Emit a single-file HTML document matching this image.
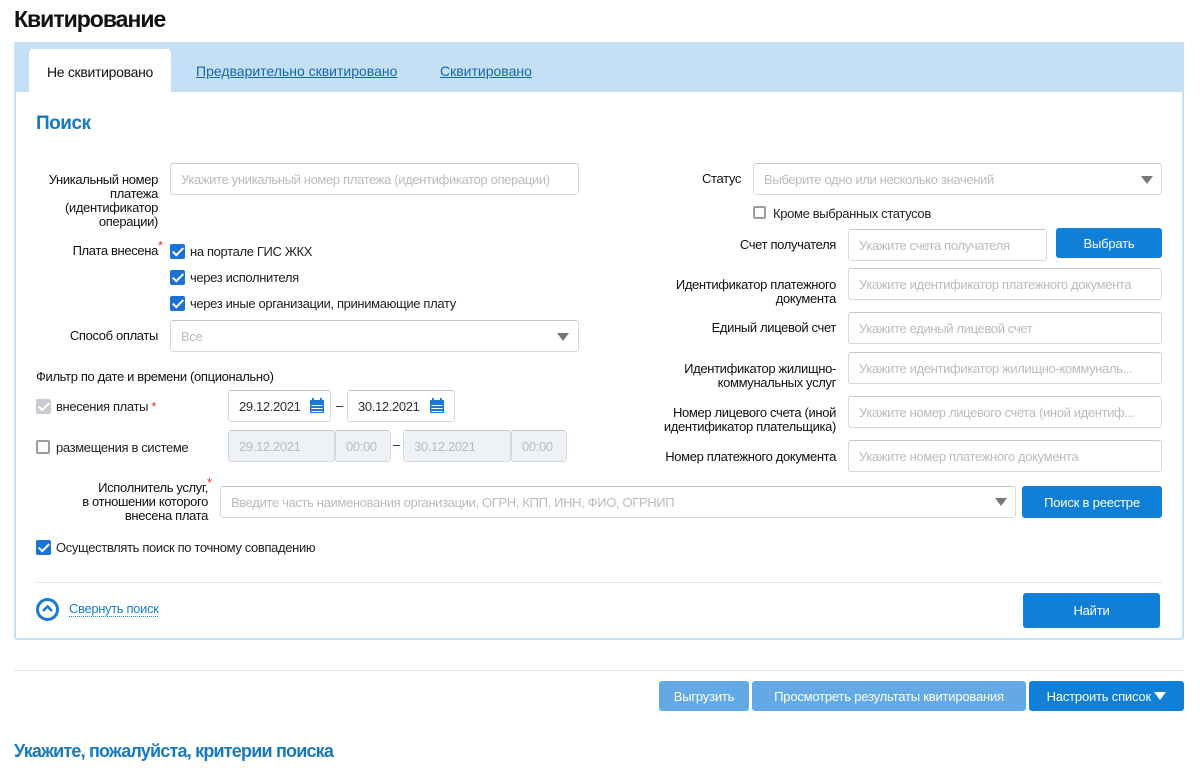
<!DOCTYPE html>
<html><head><meta charset="utf-8">
<style>
*{box-sizing:border-box;margin:0;padding:0}
body{width:1200px;height:777px;background:#fff;position:relative;overflow:hidden;font-family:"Liberation Sans Narrow","Liberation Sans",sans-serif;font-size:13px;color:#222;letter-spacing:-0.35px}
.a{position:absolute}
.lbl{position:absolute;text-align:right;font-size:13px;line-height:14px;color:#111}
.inp{position:absolute;border:1px solid #d6d9dd;border-top-color:#c4c7cb;border-radius:3px;background:#fff;color:#b8bcc0;font-size:13px;padding-left:10px;display:flex;align-items:center;white-space:nowrap;overflow:hidden}
.dis{background:#eef2f7;color:#b8bcc0}
.cb{position:absolute;width:15px;height:15px;border-radius:2px;background:#1a73d4}
.cb::after{content:"";position:absolute;left:5px;top:1px;width:4px;height:9px;border:solid #fff;border-width:0 2px 2px 0;transform:rotate(45deg)}
.cbe{position:absolute;width:14px;height:14px;border:2px solid #9a9ea3;border-radius:2px;background:#fff}
.btn{position:absolute;background:#0f7fd8;color:#fff;border-radius:3px;display:flex;align-items:center;justify-content:center;font-size:13px;letter-spacing:-0.2px}
.lt{background:#63a9e5}
.arr{position:absolute;width:0;height:0;border-left:6px solid transparent;border-right:6px solid transparent;border-top:8px solid #777}
.cal{position:absolute;width:16px;height:16px}
</style></head><body>
<div class="a" style="left:14px;top:6px;font-size:23px;font-weight:bold;color:#111;letter-spacing:-1px">Квитирование</div>

<div class="a" style="left:14px;top:42px;width:1170px;height:598px;border:2px solid #c5e0f5;border-top:none;border-radius:0 0 3px 3px"></div>
<div class="a" style="left:14px;top:42px;width:1170px;height:50px;background:#c5e0f5"></div>
<div class="a" style="left:29px;top:49px;width:142px;height:44px;background:#fff;border-radius:4px 4px 0 0;text-align:center;line-height:46px;font-size:14px;color:#111;letter-spacing:-0.3px">Не сквитировано</div>
<div class="a" style="left:196px;top:63px;font-size:14px;color:#1268b3;text-decoration:underline;letter-spacing:0">Предварительно сквитировано</div>
<div class="a" style="left:440px;top:63px;font-size:14px;color:#1268b3;text-decoration:underline;letter-spacing:0">Сквитировано</div>

<div class="a" style="left:36px;top:113px;font-size:19px;color:#1679c5;font-weight:bold;letter-spacing:-0.5px">Поиск</div>

<div class="lbl" style="left:30px;width:128px;top:173px">Уникальный номер платежа (идентификатор операции)</div>
<div class="inp" style="left:170px;top:163px;width:409px;height:32px">Укажите уникальный номер платежа (идентификатор операции)</div>

<div class="lbl" style="left:30px;width:128px;top:244px">Плата внесена</div>
<div class="a" style="left:158px;top:238px;color:#d32;font-size:13px">*</div>
<div class="cb" style="left:170px;top:244px"></div><div class="a" style="left:190px;top:244px">на портале ГИС ЖКХ</div>
<div class="cb" style="left:170px;top:270px"></div><div class="a" style="left:190px;top:270px">через исполнителя</div>
<div class="cb" style="left:170px;top:296px"></div><div class="a" style="left:190px;top:296px">через иные организации, принимающие плату</div>

<div class="lbl" style="left:30px;width:128px;top:329px">Способ оплаты</div>
<div class="inp" style="left:170px;top:320px;width:409px;height:32px">Все</div>
<div class="arr" style="left:557px;top:333px"></div>

<div class="a" style="left:36px;top:369px;color:#111">Фильтр по дате и времени (опционально)</div>
<div class="cb" style="left:36px;top:399px;background:#c9cccf"></div>
<div class="a" style="left:56px;top:399px">внесения платы <span style="color:#d32">*</span></div>
<div class="inp" style="left:228px;top:390px;width:103px;height:32px;color:#333">29.12.2021</div>
<svg class="cal" style="left:309px;top:398px" viewBox="0 0 16 16"><rect x="1" y="2" width="14" height="13" fill="#1a7ad6"/><rect x="3" y="0" width="2" height="4" fill="#1a7ad6"/><rect x="11" y="0" width="2" height="4" fill="#1a7ad6"/><g fill="#fff"><rect x="2.5" y="7" width="11" height="1"/><rect x="2.5" y="10" width="11" height="1"/><rect x="2.5" y="13" width="11" height="1"/></g></svg>
<div class="a" style="left:336px;top:398px">–</div>
<div class="inp" style="left:347px;top:390px;width:108px;height:32px;color:#333">30.12.2021</div>
<svg class="cal" style="left:429px;top:398px" viewBox="0 0 16 16"><rect x="1" y="2" width="14" height="13" fill="#1a7ad6"/><rect x="3" y="0" width="2" height="4" fill="#1a7ad6"/><rect x="11" y="0" width="2" height="4" fill="#1a7ad6"/><g fill="#fff"><rect x="2.5" y="7" width="11" height="1"/><rect x="2.5" y="10" width="11" height="1"/><rect x="2.5" y="13" width="11" height="1"/></g></svg>

<div class="cbe" style="left:36px;top:440px"></div>
<div class="a" style="left:56px;top:440px">размещения в системе</div>
<div class="inp dis" style="left:228px;top:430px;width:107px;height:32px">29.12.2021</div>
<div class="inp dis" style="left:335px;top:430px;width:56px;height:32px">00:00</div>
<div class="a" style="left:393px;top:437px">–</div>
<div class="inp dis" style="left:403px;top:430px;width:108px;height:32px">30.12.2021</div>
<div class="inp dis" style="left:511px;top:430px;width:56px;height:32px">00:00</div>

<div class="lbl" style="left:60px;width:148px;top:481px">Исполнитель услуг,<br>в отношении которого<br>внесена плата</div>
<div class="a" style="left:207px;top:475px;color:#d32">*</div>
<div class="inp" style="left:220px;top:486px;width:796px;height:32px">Введите часть наименования организации, ОГРН, КПП, ИНН, ФИО, ОГРНИП</div>
<div class="arr" style="left:995px;top:498px"></div>
<div class="btn" style="left:1022px;top:486px;width:140px;height:32px">Поиск в реестре</div>

<div class="cb" style="left:36px;top:540px"></div>
<div class="a" style="left:56px;top:540px">Осуществлять поиск по точному совпадению</div>

<div class="a" style="left:36px;top:582px;width:1126px;height:1px;background:#e3e5e8"></div>
<div class="a" style="left:36px;top:598px;width:23px;height:23px;border:3px solid #1a7ad6;border-radius:50%"></div>
<svg class="a" style="left:41px;top:604px" width="13" height="10" viewBox="0 0 13 10"><path d="M2 7 L6.5 2.5 L11 7" stroke="#1a7ad6" stroke-width="2.6" fill="none"/></svg>
<div class="a" style="left:69px;top:601px;color:#1a7ad6;border-bottom:1px dotted #1a7ad6;line-height:15px">Свернуть поиск</div>
<div class="btn" style="left:1023px;top:593px;width:137px;height:35px">Найти</div>

<!-- right column -->
<div class="lbl" style="left:640px;width:101px;top:172px">Статус</div>
<div class="inp" style="left:753px;top:163px;width:409px;height:32px">Выберите одно или несколько значений</div>
<div class="arr" style="left:1141px;top:176px"></div>
<div class="cbe" style="left:753px;top:206px;width:13px;height:13px"></div>
<div class="a" style="left:773px;top:206px">Кроме выбранных статусов</div>

<div class="lbl" style="left:640px;width:196px;top:238px">Счет получателя</div>
<div class="inp" style="left:848px;top:229px;width:199px;height:32px">Укажите счета получателя</div>
<div class="btn" style="left:1056px;top:228px;width:106px;height:30px">Выбрать</div>

<div class="lbl" style="left:640px;width:196px;top:278px">Идентификатор платежного документа</div>
<div class="inp" style="left:848px;top:268px;width:314px;height:32px">Укажите идентификатор платежного документа</div>
<div class="lbl" style="left:640px;width:196px;top:321px">Единый лицевой счет</div>
<div class="inp" style="left:848px;top:312px;width:314px;height:32px">Укажите единый лицевой счет</div>
<div class="lbl" style="left:640px;width:196px;top:362px">Идентификатор жилищно-коммунальных услуг</div>
<div class="inp" style="left:848px;top:352px;width:314px;height:32px">Укажите идентификатор жилищно-коммуналь...</div>
<div class="lbl" style="left:640px;width:196px;top:406px">Номер лицевого счета (иной идентификатор плательщика)</div>
<div class="inp" style="left:848px;top:396px;width:314px;height:32px">Укажите номер лицевого счета (иной идентиф...</div>
<div class="lbl" style="left:640px;width:196px;top:450px">Номер платежного документа</div>
<div class="inp" style="left:848px;top:440px;width:314px;height:32px">Укажите номер платежного документа</div>

<div class="a" style="left:14px;top:670px;width:1170px;height:1px;background:#e3e5e8"></div>
<div class="btn lt" style="left:659px;top:681px;width:90px;height:30px">Выгрузить</div>
<div class="btn lt" style="left:752px;top:681px;width:274px;height:30px">Просмотреть результаты квитирования</div>
<div class="btn" style="left:1029px;top:681px;width:155px;height:30px">Настроить список&nbsp;<span style="display:inline-block;width:0;height:0;border-left:6px solid transparent;border-right:6px solid transparent;border-top:8px solid #fff"></span></div>

<div class="a" style="left:14px;top:741px;font-size:18px;color:#1679c5;font-weight:bold;letter-spacing:-0.8px">Укажите, пожалуйста, критерии поиска</div>
</body></html>
